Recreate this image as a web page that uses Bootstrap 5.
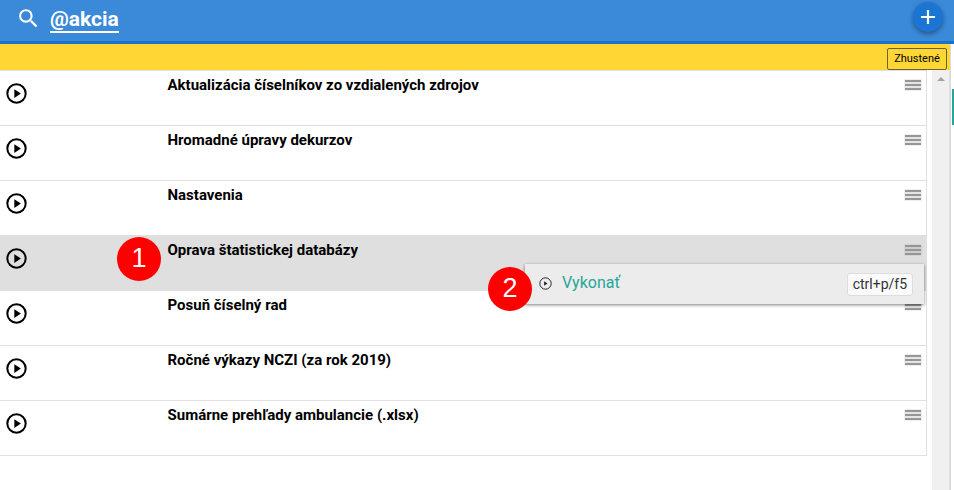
<!DOCTYPE html>
<html lang="en">
<head>
    <meta charset="UTF-8">
    <meta name="viewport" content="width=device-width, initial-scale=1.0">
    <title>Akcie</title>
    <link href="https://cdn.jsdelivr.net/npm/bootstrap@5.3.0/dist/css/bootstrap.min.css" rel="stylesheet">
    <style>
        html, body { height: 490px; overflow: hidden; }
        body { font-family: Roboto, "Liberation Sans", sans-serif; color: #000; background: #fff; position: relative; }
        .top-bar { height: 44px; background: #3b89d9; border-bottom: 3px solid #1a72cf; padding-left: 16px; }
        .search-icon { margin-top: 6px; }
        .search-text { color: #fff; font-size: 21px; font-weight: 700; line-height: 24px; border-bottom: 2px solid #fff; margin-left: 9px; height: 26px; margin-top: 7px; }
        .add-btn { position: absolute; top: 2px; left: 913px; width: 30px; height: 30px; border-radius: 50%; background: #1a76d2; box-shadow: 0 2px 5px rgba(0,0,0,.4); }
        .page-body { height: 446px; }
        .tool-strip { height: 26px; background: #ffd633; padding: 4px 3px 0 0; width: 951px; border-right: 1px solid #ddd; }
        .dense-btn { font-size: 11px; line-height: 14px; height: 22px; padding: 3px 6px; border: 1px solid #6b6033; border-radius: 2px; background: #ffd633; color: #000; width: 60px; white-space: nowrap; }
        .scroll-track { position: absolute; left: 932px; top: 70px; width: 17px; height: 420px; background: #f0f0f0; }
        .scroll-arrow { width: 0; height: 0; border-left: 4px solid transparent; border-right: 4px solid transparent; border-bottom: 4px solid #a3a3a3; margin: 7px auto 0; }
        .side-strip { position: absolute; left: 949px; top: 70px; width: 5px; height: 420px; background: #fff; border-left: 2px solid #ddd; padding-left: 1px; }
        .side-mark { height: 36px; margin-top: 19px; background: #26a69a; }
        .action-list { width: 927px; border: 1px solid #e0e0e0; border-left: 0; }
        .action-row { height: 55px; border-bottom: 1px solid #e0e0e0; }
        .action-row:last-child { border-bottom: 0; height: 54px; }
        .action-row.is-active { background: #dfdfdf; border-bottom-color: #dfdfdf; }
        .play-cell { width: 168px; padding: 10px 0 0 6px; }
        .action-name { font-size: 15px; font-weight: 700; line-height: 17px; padding-top: 6px; margin-left: -.5px; }
        .drag-lines { width: 16px; height: 10px; margin: 9px 5px 0 0; border-top: 2px solid #969696; border-bottom: 2px solid #969696; background: rgba(150,150,150,.25); box-shadow: 0 0 0 .5px rgba(150,150,150,.3); position: relative; }
        .drag-lines::after { content: ""; position: absolute; left: 0; right: 0; top: 2px; height: 2px; background: #969696; }
        .row-menu { position: absolute; left: 525px; top: 264px; width: 399px; height: 40px; background: #ececec; box-shadow: 0 1px 3px rgba(0,0,0,.5); padding-left: 14px; padding-bottom: 2px; }
        .menu-label { color: #26a69a; font-size: 16px; margin-left: 10px; line-height: 20px; }
        .key-hint { font-family: Roboto, "Liberation Sans", sans-serif; font-size: 14px; line-height: 20px; height: 23px; color: #333; background: #fafafa; border: 1px solid #ddd; border-radius: 3px; padding: 0 5px; margin: 2px 11px 0 auto; }
        .step-dot { position: absolute; width: 44px; height: 44px; border-radius: 50%; background: #f00; color: #fff; font-family: "Liberation Sans", sans-serif; font-size: 27px; line-height: 42px; text-align: center; }
        .step-one { left: 117px; top: 237px; }
        .step-two { left: 488px; top: 267px; }
    </style>
</head>
<body>

<!-- Search header -->
<div class="top-bar d-flex align-items-start">
    <svg class="search-icon" width="25" height="25" viewBox="0 0 24 24" fill="#fff"><path d="M15.5 14h-.79l-.28-.27A6.47 6.47 0 0 0 16 9.5 6.5 6.5 0 1 0 9.5 16c1.61 0 3.09-.59 4.23-1.57l.27.28v.79l5 4.99L20.49 19l-4.99-5zm-6 0C7.01 14 5 11.99 5 9.5S7.01 5 9.5 5 14 7.01 14 9.5 11.99 14 9.5 14z"/></svg>
    <div class="search-text">@akcia</div>
</div>
<div class="add-btn d-flex align-items-center justify-content-center">
    <svg width="16" height="16" viewBox="0 0 16 16"><path d="M8 1v14M1 8h14" stroke="#fff" stroke-width="2.2"/></svg>
</div>

<div class="page-body">
    <div class="tool-strip d-flex justify-content-end">
        <button type="button" class="dense-btn">Zhustené</button>
    </div>
    <div class="action-list" id="actionList"></div>
</div>

<div class="scroll-track"><div class="scroll-arrow"></div></div>
<div class="side-strip"><div class="side-mark"></div></div>

<!-- Context menu of the active row -->
<div class="row-menu d-flex align-items-center">
    <svg width="13" height="13" viewBox="0 0 24 24"><circle cx="12" cy="12" r="10.500" fill="none" stroke="#222" stroke-width="1.800"/><path d="M9.500 8v8l6-4z" fill="#222"/></svg>
    <span class="menu-label">Vykonať</span>
    <span class="key-hint">ctrl+p/f5</span>
</div>

<div class="step-dot step-one">1</div>
<div class="step-dot step-two">2</div>

<script>
    let actions = [
        "Aktualizácia číselníkov zo vzdialených zdrojov",
        "Hromadné úpravy dekurzov",
        "Nastavenia",
        "Oprava štatistickej databázy",
        "Posuň číselný rad",
        "Ročné výkazy NCZI (za rok 2019)",
        "Sumárne prehľady ambulancie (.xlsx)"
    ];

    let playIcon = `<svg width="21" height="21" viewBox="0 0 24 24"><circle cx="12" cy="12" r="10.500" fill="none" stroke="#000" stroke-width="2.300"/><path d="M9.500 7v10l7.500-5z" fill="#000"/></svg>`;

    document.getElementById("actionList").innerHTML = actions.map((name, i) => `
        <div class="action-row d-flex ${i === 3 ? "is-active" : ""}">
            <div class="play-cell flex-shrink-0">${playIcon}</div>
            <div class="action-name flex-grow-1">${name}</div>
            <div class="drag-lines flex-shrink-0"></div>
        </div>`).join("");
</script>
<script src="https://cdn.jsdelivr.net/npm/bootstrap@5.3.0/dist/js/bootstrap.bundle.min.js"></script>
</body>
</html>
